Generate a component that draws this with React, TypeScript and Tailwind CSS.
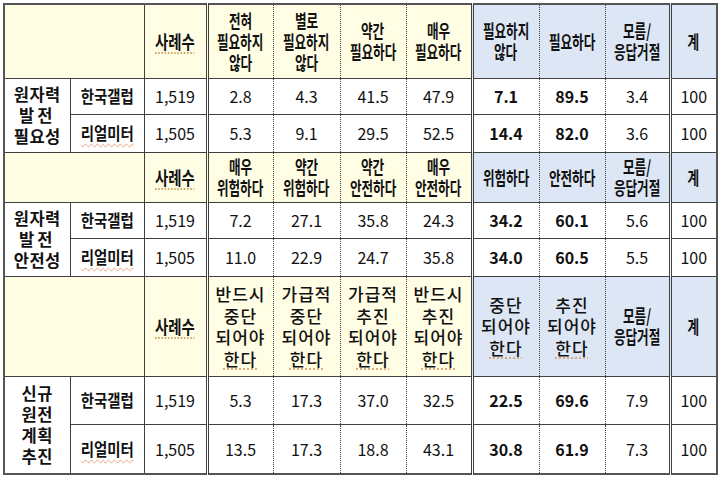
import React from "react";

const font = { fontFamily: '"Noto Sans CJK KR", "Noto Sans", sans-serif' };

// right border of each column (A..K)
const colRight = [
  "border-r border-r-[#404040]",
  "border-r border-r-[#404040]",
  "border-r-[3px] border-r-[#404040] [border-right-style:double]",
  "border-r border-r-[#404040] [border-right-style:dotted]",
  "border-r border-r-[#404040] [border-right-style:dotted]",
  "border-r border-r-[#404040] [border-right-style:dotted]",
  "border-r-[3px] border-r-[#404040] [border-right-style:double]",
  "border-r border-r-[#404040] [border-right-style:dotted]",
  "border-r border-r-[#404040] [border-right-style:dotted]",
  "border-r-[3px] border-r-[#404040] [border-right-style:double]",
  "",
];

const yellow = "bg-[#fffde3]";
const blue = "bg-[#dde6f5]";

type Section = {
  label: string[];
  heights: [string, string, string];
  condensed: boolean;
  answers: string[][];
  rows: { name: string; values: string[] }[];
};

const sections: Section[] = [
  {
    label: ["원자력", "발전", "필요성"],
    heights: ["h-[74px]", "h-[36px]", "h-[38px]"],
    condensed: true,
    answers: [
      ["전혀", "필요하지", "않다"],
      ["별로", "필요하지", "않다"],
      ["약간", "필요하다"],
      ["매우", "필요하다"],
      ["필요하지", "않다"],
      ["필요하다"],
    ],
    rows: [
      { name: "한국갤럽", values: ["1,519", "2.8", "4.3", "41.5", "47.9", "7.1", "89.5", "3.4", "100"] },
      { name: "리얼미터", values: ["1,505", "5.3", "9.1", "29.5", "52.5", "14.4", "82.0", "3.6", "100"] },
    ],
  },
  {
    label: ["원자력", "발전", "안전성"],
    heights: ["h-[50px]", "h-[36px]", "h-[38px]"],
    condensed: true,
    answers: [
      ["매우", "위험하다"],
      ["약간", "위험하다"],
      ["약간", "안전하다"],
      ["매우", "안전하다"],
      ["위험하다"],
      ["안전하다"],
    ],
    rows: [
      { name: "한국갤럽", values: ["1,519", "7.2", "27.1", "35.8", "24.3", "34.2", "60.1", "5.6", "100"] },
      { name: "리얼미터", values: ["1,505", "11.0", "22.9", "24.7", "35.8", "34.0", "60.5", "5.5", "100"] },
    ],
  },
  {
    label: ["신규", "원전", "계획", "추진"],
    heights: ["h-[100px]", "h-[48px]", "h-[50px]"],
    condensed: false,
    answers: [
      ["반드시", "중단", "되어야", "한다"],
      ["가급적", "중단", "되어야", "한다"],
      ["가급적", "추진", "되어야", "한다"],
      ["반드시", "추진", "되어야", "한다"],
      ["중단", "되어야", "한다"],
      ["추진", "되어야", "한다"],
    ],
    rows: [
      { name: "한국갤럽", values: ["1,519", "5.3", "17.3", "37.0", "32.5", "22.5", "69.6", "7.9", "100"] },
      { name: "리얼미터", values: ["1,505", "13.5", "17.3", "18.8", "43.1", "30.8", "61.9", "7.3", "100"] },
    ],
  },
];

function Squeezed({ lines }: { lines: string[] }) {
  return (
    <div className="flex flex-col items-center leading-[21px] font-bold text-[18px]">
      {lines.map((l, i) => (
        <span key={i} className="inline-block scale-x-[0.7] whitespace-nowrap">
          {l}
        </span>
      ))}
    </div>
  );
}

function Plain({ lines }: { lines: string[] }) {
  return (
    <div className="flex flex-col items-center leading-[21.5px] font-medium text-[17px] tracking-[1px]">
      {lines.map((l, i) => (
        <span
          key={i}
          className={
            l === "한다"
              ? "whitespace-nowrap underline decoration-dotted decoration-[#d8a070] underline-offset-[3px]"
              : "whitespace-nowrap"
          }
        >
          {l}
        </span>
      ))}
    </div>
  );
}

const cellBase = "border-y border-y-[#404040] text-center align-middle p-0 text-[16px] text-[#111]";

function SectionRows({ s }: { s: Section }) {
  return (
    <>
      <tr className={s.heights[0]}>
        <td colSpan={2} className={`${cellBase} ${yellow} ${colRight[1]}`}></td>
        <td className={`${cellBase} ${yellow} ${colRight[2]}`}>
          <span className="font-bold text-[18px] inline-block scale-x-[0.8] underline decoration-dotted decoration-[#c9a060] underline-offset-[4px]">
            사례수
          </span>
        </td>
        {s.answers.map((a, i) => (
          <td key={i} className={`${cellBase} ${i < 4 ? yellow : blue} ${colRight[3 + i]}`}>
            {s.condensed ? <Squeezed lines={a} /> : <Plain lines={a} />}
          </td>
        ))}
        <td className={`${cellBase} ${blue} ${colRight[9]}`}>
          <Squeezed lines={["모름/", "응답거절"]} />
        </td>
        <td className={`${cellBase} ${blue}`}>
          <Squeezed lines={["계"]} />
        </td>
      </tr>
      {s.rows.map((r, ri) => (
        <tr key={ri} className={s.heights[1 + ri]}>
          {ri === 0 && (
            <td rowSpan={2} className={`${cellBase} bg-white ${colRight[0]}`}>
              <div className="flex flex-col items-center leading-[21px] font-bold text-[16.5px] tracking-[0.5px]">
                {s.label.map((l, i) => (
                  <span key={i} className={l.length === 2 && s.label.length === 3 ? "tracking-[3px]" : ""}>
                    {l}
                  </span>
                ))}
              </div>
            </td>
          )}
          <td className={`${cellBase} bg-white ${colRight[1]}`}>
            <span
              className={
                ri === 1
                  ? "font-bold text-[17px] inline-block scale-x-[0.85] underline decoration-wavy decoration-[#e49a7a] decoration-1 underline-offset-[3px]"
                  : "font-bold text-[17px] inline-block scale-x-[0.85]"
              }
            >
              {r.name}
            </span>
          </td>
          {r.values.map((v, vi) => (
            <td
              key={vi}
              className={`${cellBase} bg-white ${colRight[2 + vi]} ${vi === 5 || vi === 6 ? "font-bold" : ""}`}
            >
              {v}
            </td>
          ))}
        </tr>
      ))}
    </>
  );
}

export default function App() {
  return (
    <div className="w-[720px] h-[478px] bg-white pt-[3px] pl-[3px]" style={font}>
      <table className="border-collapse table-fixed border-2 border-[#555] w-[715px]">
        <colgroup>
          <col className="w-[66px]" />
          <col className="w-[74px]" />
          <col className="w-[63px]" />
          <col className="w-[66px]" />
          <col className="w-[67px]" />
          <col className="w-[66px]" />
          <col className="w-[66px]" />
          <col className="w-[67px]" />
          <col className="w-[66px]" />
          <col className="w-[65px]" />
          <col className="w-[47px]" />
        </colgroup>
        <tbody>
          {sections.map((s, i) => (
            <SectionRows key={i} s={s} />
          ))}
        </tbody>
      </table>
    </div>
  );
}
